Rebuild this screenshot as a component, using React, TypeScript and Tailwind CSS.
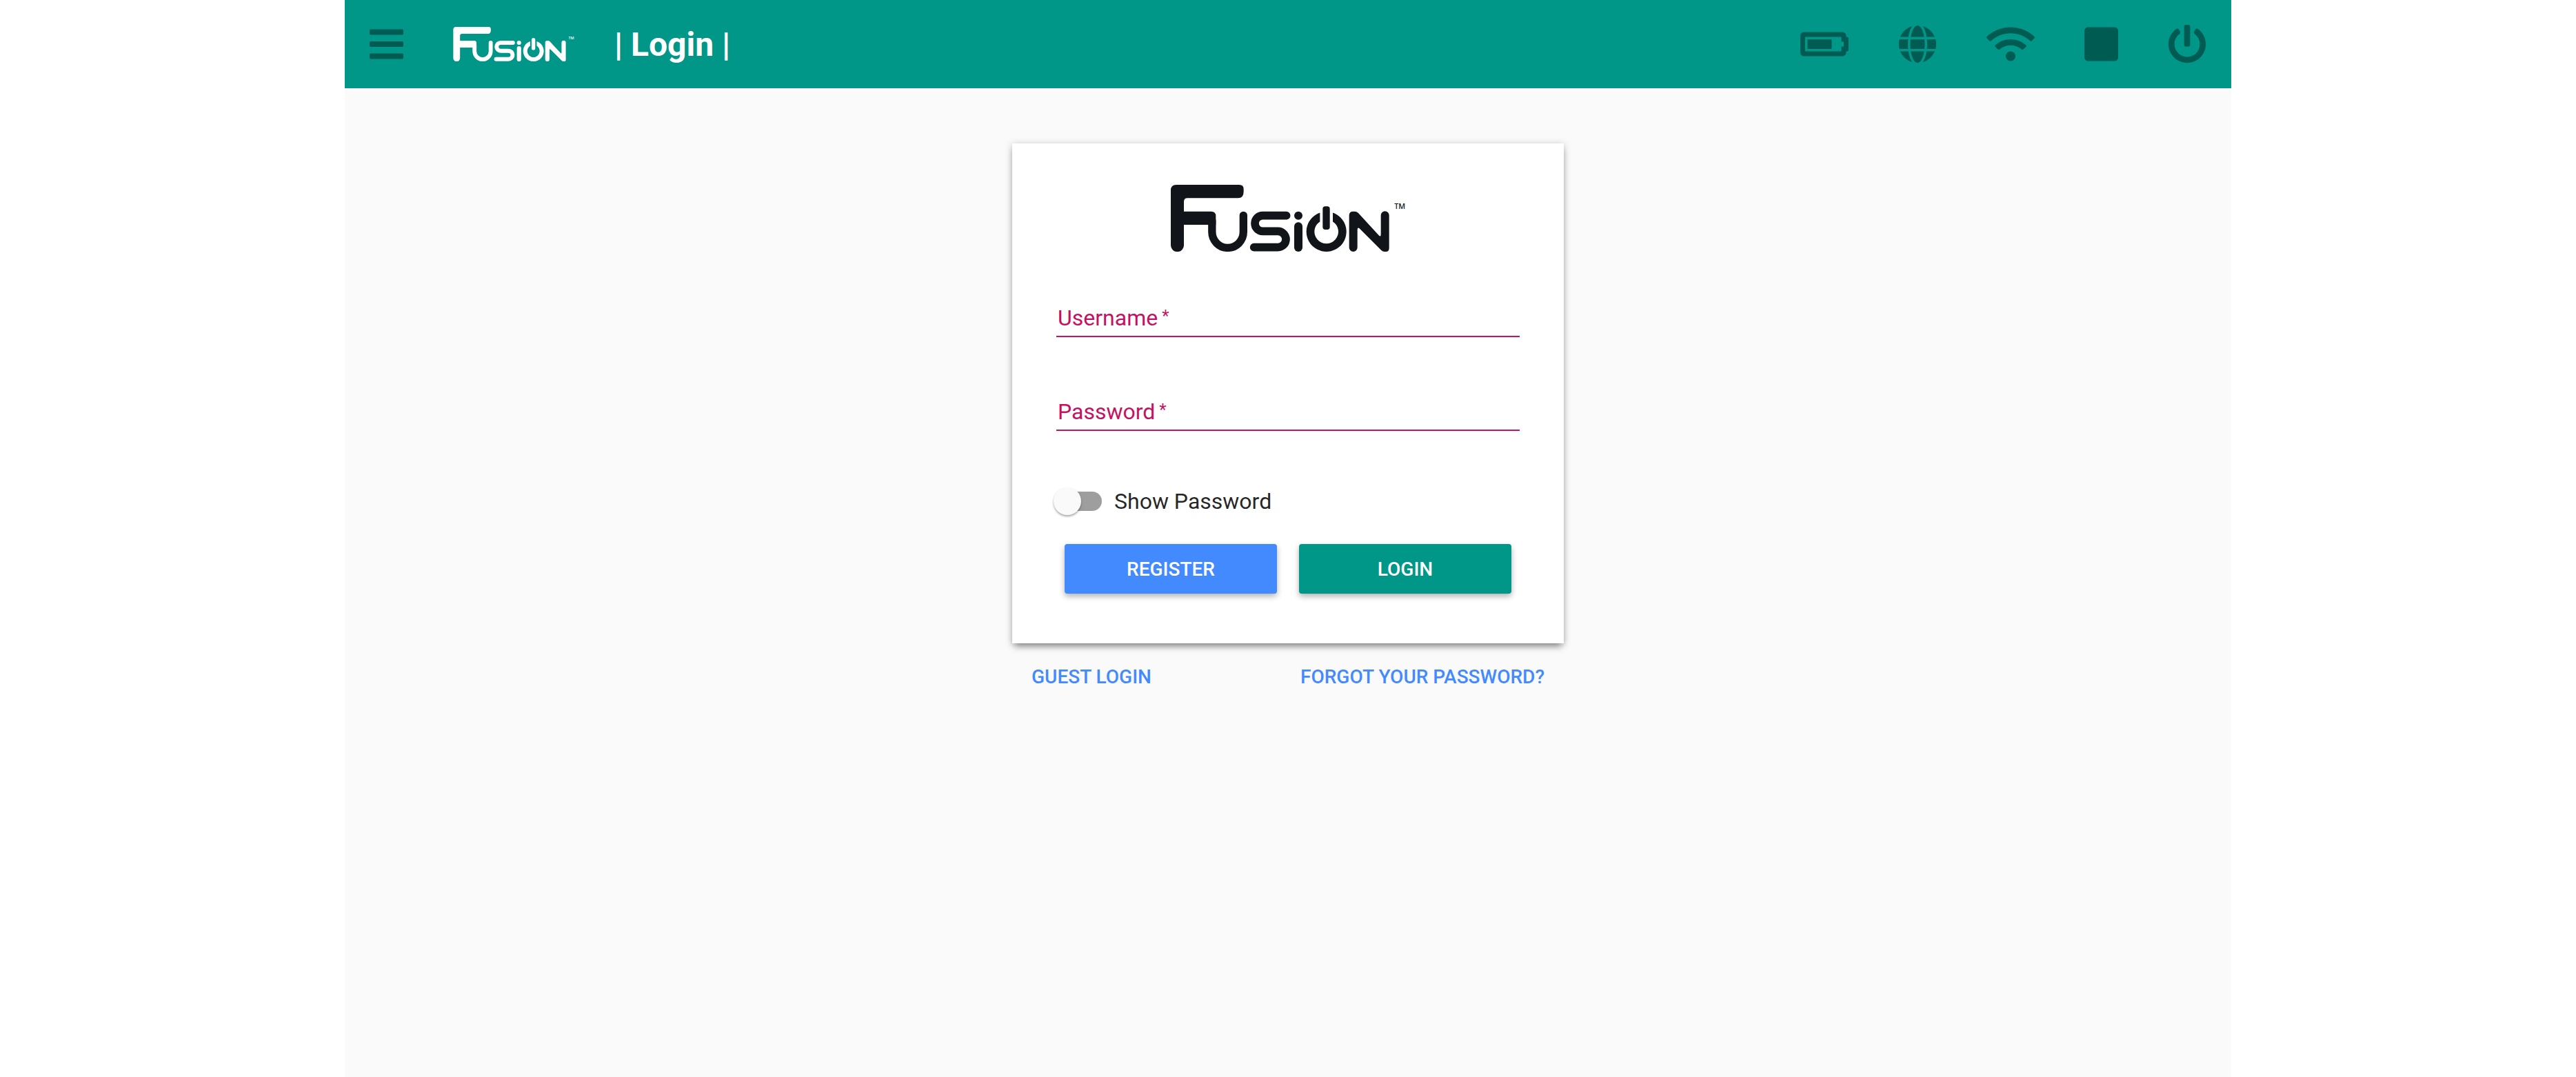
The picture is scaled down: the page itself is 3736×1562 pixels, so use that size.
import { useState } from "react";
import type { InputHTMLAttributes } from "react";
import {
  FaBars,
  FaBatteryThreeQuarters,
  FaGlobe,
  FaPowerOff,
  FaStop,
  FaWifi,
} from "react-icons/fa";

function FusionLogo({ className }: { className: string }) {
  return (
    <svg
      viewBox="114 84 1020 291"
      className={className}
      fill="currentColor"
      role="img"
      aria-label="Fusion"
    >
      <path d="M138 84H412Q431 84 431 103V114Q431 142 407 142H187Q171 142 171 158V200H290Q310 200 310 220V258H171V347A28.5 28.5 0 0 1 114 347V108Q114 84 138 84Z" />
      <g fill="none" stroke="currentColor" strokeLinecap="round">
        <path strokeWidth="34" d="M293.5 240V289A68 69 0 0 0 430 289V217" />
        <path
          strokeWidth="35"
          d="M617 218H514A34 34 0 0 0 514 286H580A34.500 34.500 0 0 1 580 356H476"
        />
        <path strokeWidth="36" d="M669 265V357" />
      </g>
      <circle cx="669" cy="218" r="18" />
      <path d="M763 205.600A87 87 0 1 0 819 205.600V244.200A52 52 0 1 1 763 244.200Z" />
      <rect x="775" y="178" width="31" height="101" rx="11" />
      <path d="M890 217Q890 200 907 200H914Q923 200 930 207L1019 304Q1028 313 1028 300V217A18 18 0 0 1 1064 217V360Q1064 375 1050 375H1044Q1036 375 1030 369L937 276Q926 266 926 280V357A18 18 0 0 1 890 357Z" />
      <text
        x="1134"
        y="188"
        textAnchor="end"
        fontSize="32"
        fontWeight="600"
        fontFamily="Open Sans, sans-serif"
      >
        TM
      </text>
    </svg>
  );
}

const statusItems = [
  { label: "Battery", Icon: FaBatteryThreeQuarters, size: "h-14 w-[70px]" },
  { label: "Language", Icon: FaGlobe, size: "h-14 w-14" },
  { label: "Network", Icon: FaWifi, size: "h-14 w-[70px]" },
  { label: "Stop", Icon: FaStop, size: "h-14 w-[49px]" },
  { label: "Power", Icon: FaPowerOff, size: "h-14 w-14" },
];

function Header() {
  return (
    <header className="flex h-32 items-center justify-between bg-[#009688] px-9">
      <div className="flex items-center gap-[72px]">
        <button type="button" aria-label="Menu" className="text-[#005c53]">
          <FaBars className="h-14 w-[49px]" />
        </button>
        <div className="flex items-center gap-[58px]">
          <FusionLogo className="h-[50px] w-44 text-white" />
          <h1 className="pt-0.5 text-5xl font-bold text-white">| Login |</h1>
        </div>
      </div>
      <nav aria-label="Status" className="flex items-center gap-[72px] text-[#005c53]">
        {statusItems.map(({ label, Icon, size }) => (
          <button key={label} type="button" aria-label={label}>
            <Icon className={size} />
          </button>
        ))}
      </nav>
    </header>
  );
}

function Field({
  id,
  label,
  ...input
}: { id: string; label: string } & InputHTMLAttributes<HTMLInputElement>) {
  return (
    <div className="relative h-16 border-b-2 border-[#c51162]">
      <input
        id={id}
        required
        placeholder=" "
        className="peer h-full w-full bg-transparent px-0.5 text-[32px] text-black/87 outline-none"
        {...input}
      />
      <label
        htmlFor={id}
        className="pointer-events-none absolute bottom-1.5 left-0.5 text-[32px] leading-[40px] text-[#c51162] peer-[:not(:placeholder-shown)]:hidden"
      >
        {label}
        <span className="align-[6px] text-2xl leading-none">&nbsp;*</span>
      </label>
    </div>
  );
}

export default function App() {
  const [showPassword, setShowPassword] = useState(false);

  return (
    <div className="min-h-screen bg-white font-['Roboto',sans-serif]">
      <div className="mx-auto min-h-screen max-w-[2736px] bg-[#fafafa]">
        <Header />
        <main className="mx-auto max-w-[800px] pt-20">
          <form
            onSubmit={(event) => event.preventDefault()}
            className="bg-white px-16 pt-[60px] pb-[72px] shadow-[0_8px_10px_-4px_rgba(0,0,0,0.35),0_2px_10px_0_rgba(0,0,0,0.26)]"
          >
            <FusionLogo className="mx-auto h-[97px] w-[340px] text-[#11151a]" />
            <div className="mt-[60px] flex flex-col gap-[72px]">
              <Field id="username" label="Username" autoComplete="username" />
              <Field
                id="password"
                label="Password"
                type={showPassword ? "text" : "password"}
                autoComplete="current-password"
              />
            </div>
            <label className="mt-20 flex h-11 w-fit cursor-pointer items-center gap-[18px] text-[32px] text-black/87">
              <span className="relative flex h-7 w-[66px] items-center rounded-full bg-[#9e9e9e]">
                <input
                  type="checkbox"
                  role="switch"
                  checked={showPassword}
                  onChange={(event) => setShowPassword(event.target.checked)}
                  className="absolute -left-1 size-10 cursor-pointer appearance-none rounded-full bg-[#fafafa] shadow-[0_2px_3px_0_rgba(0,0,0,0.35)] checked:left-[30px]"
                />
              </span>
              Show Password
            </label>
            <div className="mt-10 flex gap-8 px-3 text-[28px] font-medium text-white uppercase">
              <button
                type="button"
                className="h-[72px] flex-1 rounded bg-[#448aff] pt-0.5 uppercase shadow-[0_4px_8px_0_rgba(0,0,0,0.3)]"
              >
                Register
              </button>
              <button
                type="submit"
                className="h-[72px] flex-1 rounded bg-[#009688] pt-0.5 uppercase shadow-[0_4px_8px_0_rgba(0,0,0,0.3)]"
              >
                Login
              </button>
            </div>
          </form>
          <nav
            aria-label="Account"
            className="mt-7 flex justify-between px-7 pt-px text-[28px] leading-[40px] font-medium text-[#448aff] uppercase"
          >
            <a href="#guest">Guest Login</a>
            <a href="#forgot">Forgot your password?</a>
          </nav>
        </main>
      </div>
    </div>
  );
}
